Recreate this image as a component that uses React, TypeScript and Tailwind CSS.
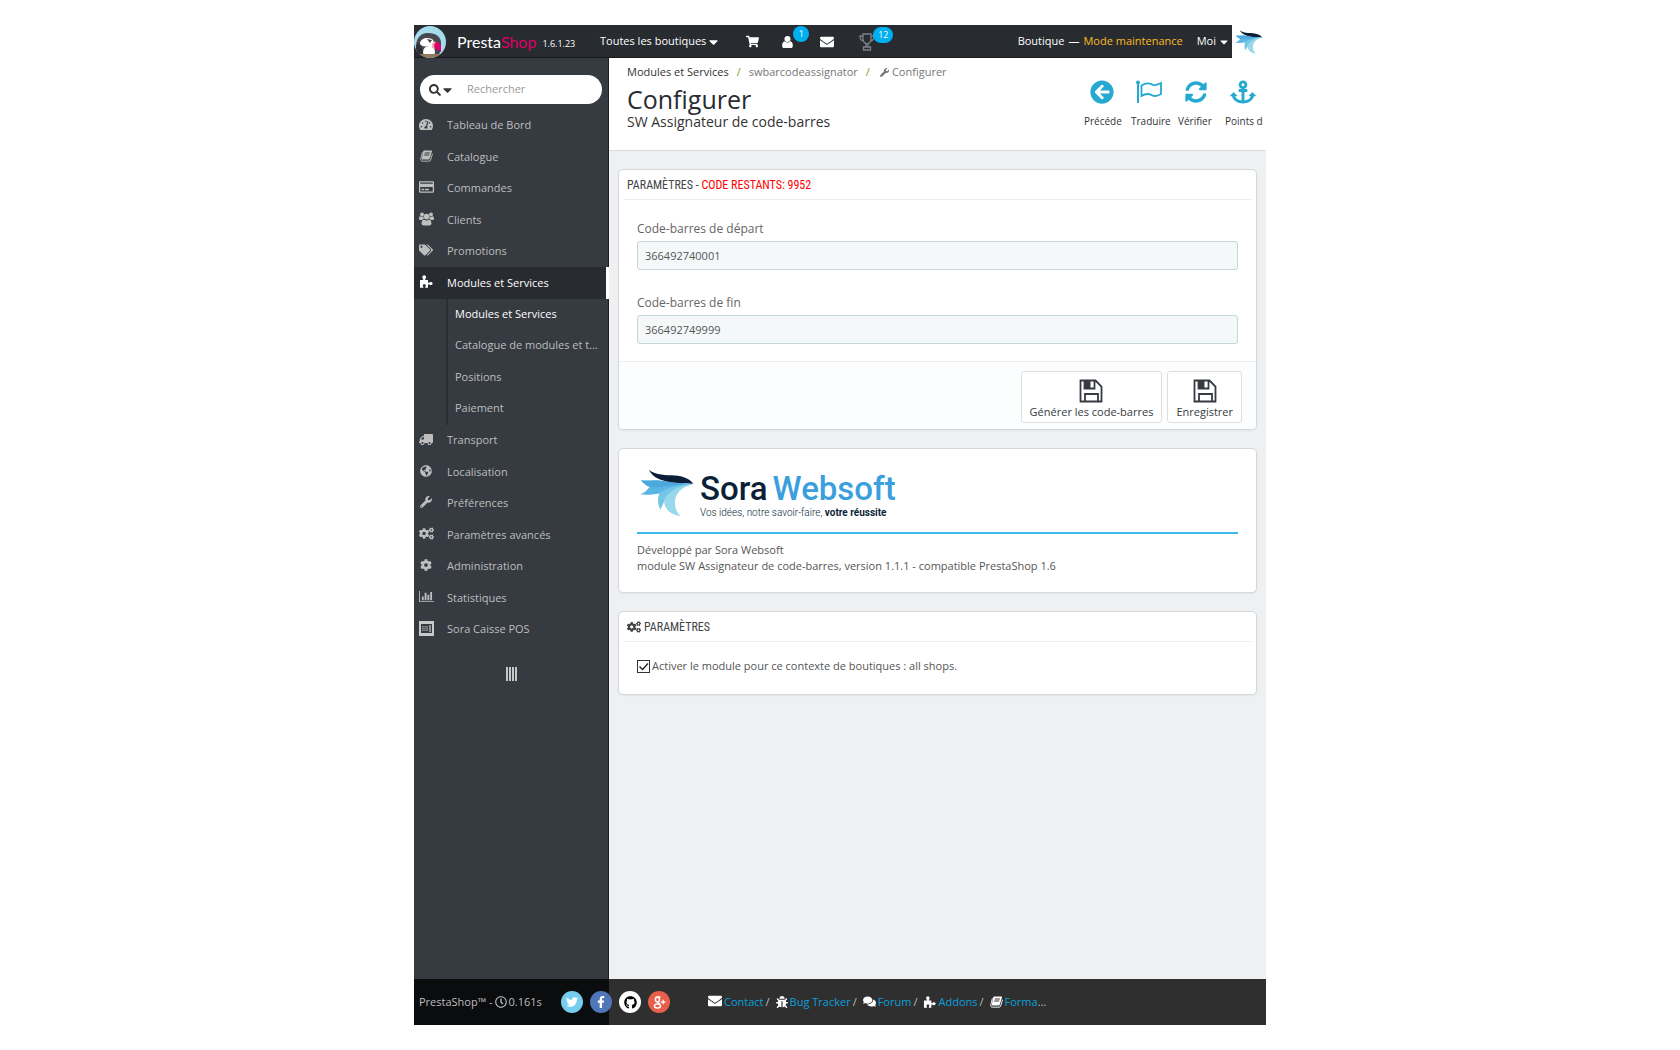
import { ReactNode, useState } from 'react';
import {
  FaAnchor,
  FaArrowCircleLeft,
  FaBug,
  FaCaretDown,
  FaCog,
  FaCogs,
  FaComments,
  FaEnvelope,
  FaFacebookF,
  FaGithub,
  FaGlobeAmericas,
  FaRegClock,
  FaRegCreditCard,
  FaSearch,
  FaShoppingCart,
  FaSyncAlt,
  FaTachometerAlt,
  FaTags,
  FaTruck,
  FaTwitter,
  FaWrench,
} from 'react-icons/fa';

type IconProps = { className?: string };

function PuzzleIcon({ className }: IconProps) {
  return (
    <svg viewBox="0 0 14 13" className={className} fill="currentColor" aria-hidden="true">
      <path d="M1 5h3.2C4.600 4.400 3.300 3.300 3.300 2.200 3.300 1 4.200.2 5.200.2s1.900.8 1.900 1.900C7.100 3.300 5.900 4.300 6.300 5H9v2.600c.7.500 1.600-.7 2.900-.7 1 0 1.700.6 1.700 1.500s-.7 1.600-1.700 1.600c-1.300 0-2.200-1.200-2.900-.7v3.500H6.300c-.6-.7.500-1.300.5-2.300 0-.8-.6-1.300-1.500-1.300s-1.500.5-1.500 1.300c0 1 1.100 1.600.5 2.300H1z" />
    </svg>
  );
}

function BookIcon({ className }: IconProps) {
  return (
    <svg viewBox="0 0 14 13" className={className} fill="none" stroke="currentColor" aria-hidden="true">
      <path
        fill="currentColor"
        fillRule="evenodd"
        stroke="none"
        d="M4.500.5h7.600c.7 0 1 .5.8 1.100L10.500 9.500c-.2.600-.6.900-1.200.9H1.700L3.400 1.400C3.600.8 4 .5 4.500.5zM5.300 2.700l-.3 1h5.500l.3-1zM4.600 5l-.3 1h5.500l.3-1z"
      />
      <path d="M2.500 2.500L.8 9.500c-.3 1.600.3 2.600 1.600 2.600h7.400c.9 0 1.400-.4 1.700-1.300l2-6.800" />
    </svg>
  );
}

function UserIcon({ className }: IconProps) {
  return (
    <svg viewBox="0 0 12 13" className={className} fill="currentColor" aria-hidden="true">
      <circle cx="6" cy="3.300" r="3.300" />
      <path d="M3 5.800c1.800 1.700 4.200 1.700 6 0 2 .3 2.800 2.400 2.800 4.700 0 1.600-.8 2.500-2.300 2.500h-7C1 13 .2 12.100.2 10.500.2 8.200 1 6.100 3 5.800z" />
    </svg>
  );
}

function UsersIcon({ className }: IconProps) {
  return (
    <svg viewBox="0 0 16 14" className={className} fill="currentColor" aria-hidden="true">
      <circle cx="3.200" cy="2.200" r="2.100" />
      <circle cx="12.800" cy="2.200" r="2.100" />
      <circle cx="8" cy="4.400" r="3" />
      <path d="M1.200 4c1.200.9 2.400.9 3.400.4 0 1 .2 1.900.7 2.700-1 .1-1.700.5-2.200 1H1.500C.6 8.100 0 7.600 0 6.700 0 5.400.3 4.100 1.200 4zM14.800 4c-1.200.9-2.400.9-3.400.4 0 1-.2 1.900-.7 2.700 1 .1 1.700.5 2.200 1h1.600c.9 0 1.500-.5 1.500-1.400 0-1.300-.3-2.600-1.200-2.700zM5.300 7.600c1.700 1.400 3.700 1.400 5.400 0 1.800.2 2.600 2 2.600 4 0 1.500-.8 2.300-2.200 2.300H4.900c-1.400 0-2.200-.8-2.200-2.300 0-2 .8-3.800 2.600-4z" />
    </svg>
  );
}

function ChartIcon({ className }: IconProps) {
  return (
    <svg viewBox="0 0 16 13" className={className} fill="currentColor" aria-hidden="true">
      <path d="M0 0h1v11h15v1H0zM3 6h2v4H3zM6 2h2v8H6zM9 4h2v6H9zM12 1h2v9h-2z" />
    </svg>
  );
}

function PosIcon({ className }: IconProps) {
  return (
    <svg viewBox="0 0 15 15" className={className} aria-hidden="true">
      <path fill="#c8c9cb" d="M0 0h15v15H0z" />
      <path fill="#363a41" d="M2 3h11v9H2z" />
      <path fill="#8d9094" d="M3 5h6v5H3zM10 4h2v7h-2z" />
      <path stroke="#363a41" strokeWidth=".5" d="M3 6.500h6M3 8.500h6M5 5v5M7 5v5" />
    </svg>
  );
}

function TrophyIcon({ className }: IconProps) {
  return (
    <svg viewBox="0 0 16 18" className={className} fill="none" stroke="currentColor" strokeWidth="1.300" aria-hidden="true">
      <path d="M4 1h8v5c0 3-2 4.500-4 5-2-.5-4-2-4-5zM4 3H1c0 3 1.500 5 4 5M12 3h3c0 3-1.500 5-4 5M7 11v3M9 11v3M4.500 14h7v3h-7z" />
    </svg>
  );
}

function FlagIcon({ className }: IconProps) {
  return (
    <svg viewBox="0 0 26 24" className={className} fill="none" stroke="currentColor" aria-hidden="true">
      <circle cx="2" cy="2.500" r="2" fill="currentColor" stroke="none" />
      <path d="M2 2v21" strokeWidth="2" />
      <path d="M5.500 5.500c6-4 9-2 11-.8s4 .6 8.500-1.700v11c-4 2.500-7 2.300-9 1.200S11 12.500 5.500 16z" strokeWidth="1.800" />
    </svg>
  );
}

function FloppyIcon({ className }: IconProps) {
  return (
    <svg viewBox="0 0 24 24" className={className} fill="none" stroke="currentColor" strokeWidth="1.800" aria-hidden="true">
      <path d="M1.500 1.500h15l6 6v15h-21zM6 22.500v-7.500h13v7.500M5.500 1.500v8h10v-8" />
      <path d="M6 2h5.500v7H6z" fill="currentColor" stroke="none" />
    </svg>
  );
}

function GooglePlusIcon({ className }: IconProps) {
  return (
    <svg viewBox="0 0 14 14" className={className} fill="none" stroke="currentColor" strokeWidth="1.600" aria-hidden="true">
      <ellipse cx="4.800" cy="3.800" rx="2.200" ry="2.600" />
      <ellipse cx="4.800" cy="10.800" rx="3.200" ry="2.200" />
      <path d="M4.500 1.200H8M5.500 6.200c-1 .8 1.500 1.400 2 3" />
      <path d="M8.500 6.500h5M11 4v5" strokeWidth="1.300" />
    </svg>
  );
}

function BarsIcon({ className }: IconProps) {
  return (
    <svg viewBox="0 0 11 14" className={className} fill="#c5c6c8" aria-hidden="true">
      <path d="M0 0h2v14H0zM3 0h2v14H3zM6 0h2v14H6zM9 0h2v14H9z" />
    </svg>
  );
}

function BirdLogo({ className }: IconProps) {
  return (
    <svg viewBox="90 90 162 140" className={className} aria-hidden="true">
      <path fill="#59b5e3" d="M95 123c20 4 40-2 62 2 25 3 50 6 91 8-30 6-60 18-92 28-25 4-45 6-63 3 9-4 16-8 21-14 2-3 4-6 6-7-10-4-19-11-25-20z" />
      <path fill="#4aa8de" d="M95 123c22 3 40-4 62 2 25 5 50 6 91 8-40 4-75 4-105 10-17 2-36-7-48-20z" />
      <path fill="#74c6e8" d="M150 158c20-12 50-22 98-25-42 12-70 30-86 54-4 8-8 15-10 22-8-14-10-33-2-51z" />
      <path fill="#97d9ea" d="M163 180c12-26 44-42 85-47-38 10-55 32-54 58 1 14 6 26 16 37-30-6-49-22-47-48z" />
      <path fill="#0d1f38" d="M118 92c22 17 50 15 76 17 24 2 42 9 54 24-22-5-40 0-62-4-30-4-55-12-68-37z" />
    </svg>
  );
}

function PuffinLogo({ className }: IconProps) {
  return (
    <svg viewBox="0 0 32 32" className={className} aria-hidden="true">
      <clipPath id="puffin">
        <circle cx="16" cy="16" r="16" />
      </clipPath>
      <circle cx="16" cy="16" r="16" fill="#a4dbed" />
      <g clipPath="url(#puffin)">
        <path fill="#47484d" d="M2 24C1 13 6 7 14 7c8 0 13 4 13 10s0 8-3 13H5z" />
        <path fill="#303136" d="M2 23c0-3 1-5 3-6l6 11H4z" />
        <ellipse cx="15" cy="26" rx="6" ry="6" fill="#fff" />
        <path fill="#fff" d="M6 17c1-5 7-6 12-4 3 3 2 5-3 7-5 1-9 0-9-3z" />
        <path fill="#3d3d42" d="M13 13l5 1-2 3z" />
        <path fill="#fff" d="M15 19c1-3 5-4 7-3-3 1-4 4-3 8-2 0-4-2-4-5z" />
        <path fill="#f0a8b8" d="M18 18c1-2 3-2 5-1-2 1-3 3-2 6-2 0-4-2-3-5z" />
        <path fill="#df0067" d="M21 17c3-2 6 0 6 3v6c-2-2-5-2-6-4-1-1-1-3 0-5z" />
        <path fill="#8f7a5b" d="M5 28h22v4H5z" />
      </g>
    </svg>
  );
}

type MenuItem = { label: string; icon: ReactNode; children?: string[] };

const iconClass = 'h-[13px] w-[14px]';

const menu: MenuItem[] = [
  { label: 'Tableau de Bord', icon: <FaTachometerAlt className={iconClass} /> },
  { label: 'Catalogue', icon: <BookIcon className="h-3 w-[13px]" /> },
  { label: 'Commandes', icon: <FaRegCreditCard className="h-[14px] w-[15px]" /> },
  { label: 'Clients', icon: <UsersIcon className="h-[14px] w-[15px]" /> },
  { label: 'Promotions', icon: <FaTags className="h-[14px] w-[14px]" /> },
  {
    label: 'Modules et Services',
    icon: <PuzzleIcon className={iconClass} />,
    children: ['Modules et Services', 'Catalogue de modules et thèmes', 'Positions', 'Paiement'],
  },
  { label: 'Transport', icon: <FaTruck className="h-[13px] w-[14px] -scale-x-100" /> },
  { label: 'Localisation', icon: <FaGlobeAmericas className="h-3 w-3" /> },
  { label: 'Préférences', icon: <FaWrench className="h-3 w-3" /> },
  { label: 'Paramètres avancés', icon: <FaCogs className="h-[15px] w-[15px]" /> },
  { label: 'Administration', icon: <FaCog className="h-3 w-3" /> },
  { label: 'Statistiques', icon: <ChartIcon className="h-3 w-[15px]" /> },
  { label: 'Sora Caisse POS', icon: <PosIcon className="h-[15px] w-[15px]" /> },
];

const toolbar = [
  { label: 'Précéde', icon: <FaArrowCircleLeft className="h-6 w-6" /> },
  { label: 'Traduire', icon: <FlagIcon className="h-6 w-[26px]" /> },
  { label: 'Vérifier', icon: <FaSyncAlt className="h-6 w-[22px]" /> },
  { label: 'Points d', icon: <FaAnchor className="h-[26px] w-[26px]" /> },
];

const socials = [
  { label: 'Twitter', icon: <FaTwitter className="h-3 w-3" />, className: 'bg-[#76cdee] text-white' },
  { label: 'Facebook', icon: <FaFacebookF className="h-3 w-3" />, className: 'bg-[#4f76b8] text-white' },
  { label: 'Github', icon: <FaGithub className="h-[13px] w-[13px]" />, className: 'bg-white text-black' },
  { label: 'Google+', icon: <GooglePlusIcon className="h-[13px] w-[13px]" />, className: 'bg-[#e8604c] text-white' },
];

const footerLinks = [
  { label: 'Contact', icon: <FaEnvelope className="h-[14px] w-[14px]" /> },
  { label: 'Bug Tracker', icon: <FaBug className="h-3 w-3" /> },
  { label: 'Forum', icon: <FaComments className="h-[13px] w-[13px]" /> },
  { label: 'Addons', icon: <PuzzleIcon className="h-3 w-[13px]" /> },
  { label: 'Formation', icon: <BookIcon className="h-3 w-[13px]" /> },
];

function TopBar() {
  return (
    <header className="flex h-[33px] text-white">
      <div className="flex min-w-0 flex-1 items-center border-b border-[#17191d] bg-[#282b30] pt-px">
        <a href="#" className="flex w-[186px] shrink-0 items-center">
          <PuffinLogo className="h-8 w-8" />
          <span className="ml-[11px] font-['Lato'] text-[16px] leading-5">
            Presta<span className="text-[#df0067]">Shop</span>
          </span>
          <span className="ml-[6px] pt-1 text-[9px]">1.6.1.23</span>
        </a>
        <button type="button" className="flex items-center gap-[3px] text-[11px]">
          Toutes les boutiques
          <FaCaretDown className="h-[14px] w-[9px]" />
        </button>
        <nav className="ml-7 flex items-center">
          <a href="#" aria-label="Commandes" className="w-9">
            <FaShoppingCart className="h-[13px] w-[13px]" />
          </a>
          <a href="#" aria-label="Clients" className="relative w-[38px]">
            <UserIcon className="h-3 w-[11px]" />
            <span className="absolute -top-[10px] left-[11px] flex h-4 w-4 items-center justify-center rounded-full bg-[#00aff0] text-[9px]">
              1
            </span>
          </a>
          <a href="#" aria-label="Messages" className="w-[39px]">
            <FaEnvelope className="h-[14px] w-[14px]" />
          </a>
          <a href="#" aria-label="Trophées" className="relative text-[#7b8286]">
            <TrophyIcon className="h-[18px] w-4" />
            <span className="absolute -top-[6px] left-[14px] flex h-4 w-5 items-center justify-center rounded-full bg-[#00aff0] text-[9px] text-white">
              12
            </span>
          </a>
        </nav>
        <div className="ml-auto flex items-center pr-1 text-[11px]">
          <a href="#">Boutique</a>
          <span className="mx-1">—</span>
          <a href="#" className="text-[#fbbb22]">
            Mode maintenance
          </a>
          <button type="button" className="ml-[14px] flex items-center gap-1">
            Moi
            <FaCaretDown className="h-3 w-2" />
          </button>
        </div>
      </div>
      <a href="#" aria-label="Sora Websoft" className="flex w-[34px] items-center justify-center">
        <BirdLogo className="h-[26px] w-7" />
      </a>
    </header>
  );
}

function Sidebar() {
  return (
    <aside className="w-[195px] shrink-0 border-r border-[#1c1e23] bg-[#363a41] text-[11px] text-[#bebebf]">
      <form className="mx-[6px] mt-[17px] flex h-[29px] items-center rounded-full bg-white pl-[9px] text-[#333]">
        <button type="button" aria-label="Type de recherche" className="flex items-center gap-[2px]">
          <FaSearch className="h-3 w-3" />
          <FaCaretDown className="h-[14px] w-[9px]" />
        </button>
        <input
          type="text"
          aria-label="Rechercher"
          placeholder="Rechercher"
          className="ml-[15px] w-28 bg-transparent outline-none placeholder:text-[#999]"
        />
      </form>
      <nav className="mt-[6px]">
        <ul>
          {menu.map((item) => (
            <li key={item.label} className="[&>a]:h-[31px] even:[&>a]:h-8">
              <a
                href="#"
                className={
                  item.children
                    ? '-mr-px flex items-center border-r-[3px] border-white bg-[#282b30] text-white'
                    : 'flex items-center'
                }
              >
                <span className="flex w-[33px] justify-center pr-[9px] pb-[3px]">{item.icon}</span>
                {item.label}
              </a>
              {item.children && (
                <ul className="ml-8 border-l-2 border-[#2b2e34]">
                  {item.children.map((child, i) => (
                    <li key={child} className="[&>a]:h-[31px] even:[&>a]:h-8 [&>a]:leading-[30px]">
                      <a href="#" className={i === 0 ? 'block truncate px-[7px] text-white' : 'block truncate px-[7px]'}>
                        {child}
                      </a>
                    </li>
                  ))}
                </ul>
              )}
            </li>
          ))}
        </ul>
      </nav>
      <button type="button" aria-label="Réduire le menu" className="mt-[22px] flex w-full justify-center">
        <BarsIcon className="h-[14px] w-[11px]" />
      </button>
    </aside>
  );
}

function PageHead() {
  return (
    <div className="flex h-[93px] justify-between border-b border-[#d9dbde] bg-white pl-[18px]">
      <div className="pt-[6px]">
        <nav className="flex text-[11px] leading-4 text-[#777]">
          <a href="#" className="text-[#333]">
            Modules et Services
          </a>
          <span className="mx-2 text-[#72a03b]">/</span>
          <a href="#">swbarcodeassignator</a>
          <span className="mx-2 text-[#72a03b]">/</span>
          <span className="ml-[2px] flex items-center gap-[3px]">
            <FaWrench className="h-[9px] w-[9px]" />
            Configurer
          </span>
        </nav>
        <h1 className="mt-[5px] text-[25px] leading-[29px] text-[#282b30]">Configurer</h1>
        <p className="text-[14px] leading-4 text-[#333]">SW Assignateur de code-barres</p>
      </div>
      <ul className="flex gap-2 pt-5 pr-[2px]">
        {toolbar.map((action) => (
          <li key={action.label} className="w-[39px]">
            <a href="#" className="flex flex-col text-[10px] text-[#333]">
              <span className="flex h-7 w-[35px] items-center justify-center text-[#25a9d1]">{action.icon}</span>
              <span className="mt-[7px] leading-4 whitespace-nowrap">{action.label}</span>
            </a>
          </li>
        ))}
      </ul>
    </div>
  );
}

function Panel({ children }: { children: ReactNode }) {
  return <section className="overflow-hidden rounded-[5px] border border-[#d3d8db] bg-white shadow-xs">{children}</section>;
}

function PanelHeading({ children }: { children: ReactNode }) {
  return (
    <h3 className="mx-1 flex h-[30px] items-center gap-[3px] border-b border-[#eee] px-1 font-['Liberation_Sans_Narrow','Roboto_Condensed','Open_Sans',sans-serif] text-[12px] text-[#444] uppercase">
      {children}
    </h3>
  );
}

type FieldProps = { id: string; label: string; defaultValue: string };

function Field({ id, label, defaultValue }: FieldProps) {
  return (
    <div>
      <label htmlFor={id} className="block text-[12px] leading-4 text-[#666]">
        {label}
      </label>
      <input
        id={id}
        type="text"
        defaultValue={defaultValue}
        className="mt-1 block h-[29px] w-full rounded-[3px] border border-[#c7d6db] bg-[#f5f8f9] px-[7px] text-[11px] text-[#555]"
      />
    </div>
  );
}

function SaveButton({ label }: { label: string }) {
  return (
    <button
      type="button"
      className="flex h-[52px] flex-col items-center rounded-[3px] border border-[#dedede] bg-white px-2 pt-[7px] text-[11px] text-[#363a41]"
    >
      <FloppyIcon className="h-6 w-6" />
      <span className="leading-[18px]">{label}</span>
    </button>
  );
}

function Footer() {
  return (
    <footer className="flex h-[46px] items-center bg-[linear-gradient(90deg,#0b0c0e_195px,#2f2f2f_195px)] text-[11px] text-[#bebebf]">
      <div className="flex w-[147px] items-center pl-[5px] whitespace-nowrap">
        PrestaShop™ -
        <FaRegClock className="mx-[2px] h-3 w-3" />
        0.161s
      </div>
      <div className="flex gap-[7px]">
        {socials.map((social) => (
          <a
            key={social.label}
            href="#"
            aria-label={social.label}
            className={`flex h-[22px] w-[22px] items-center justify-center rounded-full ${social.className}`}
          >
            {social.icon}
          </a>
        ))}
      </div>
      <div className="ml-[38px] w-[342px] truncate">
        {footerLinks.map((link, i) => (
          <span key={link.label}>
            {i > 0 && <span className="mr-[6px] ml-[2px]">/</span>}
            <a href="#" className="text-[#0ba0dc]">
              <span className="mr-[2px] inline-block align-[-2px] text-white">{link.icon}</span>
              {link.label}
            </a>
          </span>
        ))}
      </div>
    </footer>
  );
}

export default function App() {
  const [enabled, setEnabled] = useState(true);

  return (
    <div className="flex min-h-screen bg-white py-[25px] font-['Open_Sans',sans-serif]">
      <div className="mx-auto flex w-full max-w-[852px] flex-col">
        <TopBar />
        <div className="flex flex-1">
          <Sidebar />
          <main className="min-w-0 flex-1 bg-[#eff0f2]">
            <PageHead />
            <div className="flex flex-col gap-[18px] px-[9px] py-[18px]">
              <Panel>
                <PanelHeading>
                  <span>
                    Paramètres - <span className="text-[#f00]">Code restants: 9952</span>
                  </span>
                </PanelHeading>
                <div className="space-y-[25px] px-[18px] pt-[21px] pb-[17px]">
                  <Field id="barcode-start" label="Code-barres de départ" defaultValue="366492740001" />
                  <Field id="barcode-end" label="Code-barres de fin" defaultValue="366492749999" />
                </div>
                <div className="flex h-[68px] justify-end gap-[5px] border-t border-[#eee] bg-[#fcfdfe] pt-[9px] pr-[14px]">
                  <SaveButton label="Générer les code-barres" />
                  <SaveButton label="Enregistrer" />
                </div>
              </Panel>

              <Panel>
                <div className="px-[18px] pt-5 pb-[18px] text-[11px] leading-4 text-[#555]">
                  <div className="flex h-[65px] items-start border-b-2 border-[#3cb9ea] pl-[2px]">
                    <BirdLogo className="h-[48px] w-[56px]" />
                    <div className="ml-[5px] pt-[2px] font-['Roboto'] text-[#0d1f38]">
                      <p className="flex gap-[5px] text-[33px] leading-9 font-medium whitespace-nowrap">
                        Sora <span className="text-[#3a9fdc]">Websoft</span>
                      </p>
                      <p className="text-[10px] leading-3 font-light">
                        Vos idées, notre savoir-faire, <span className="font-bold">votre réussite</span>
                      </p>
                    </div>
                  </div>
                  <p className="mt-2">Développé par Sora Websoft</p>
                  <p>module SW Assignateur de code-barres, version 1.1.1 - compatible PrestaShop 1.6</p>
                </div>
              </Panel>

              <Panel>
                <PanelHeading>
                  <FaCogs className="h-[14px] w-[14px]" />
                  Paramètres
                </PanelHeading>
                <label className="flex items-center gap-[2px] px-[18px] pt-4 pb-5 text-[11px] leading-4 text-[#555]">
                  <span className="relative flex">
                    <input
                      type="checkbox"
                      checked={enabled}
                      onChange={(e) => setEnabled(e.target.checked)}
                      className="h-[13px] w-[13px] appearance-none border border-[#333] bg-white"
                    />
                    {enabled && (
                      <svg viewBox="0 0 13 13" className="pointer-events-none absolute inset-0" fill="none" stroke="#222" aria-hidden="true">
                        <path d="M2.500 6.500l3 3 5.500-6" strokeWidth="1.300" />
                      </svg>
                    )}
                  </span>
                  Activer le module pour ce contexte de boutiques : all shops.
                </label>
              </Panel>
            </div>
          </main>
        </div>
        <Footer />
      </div>
    </div>
  );
}
